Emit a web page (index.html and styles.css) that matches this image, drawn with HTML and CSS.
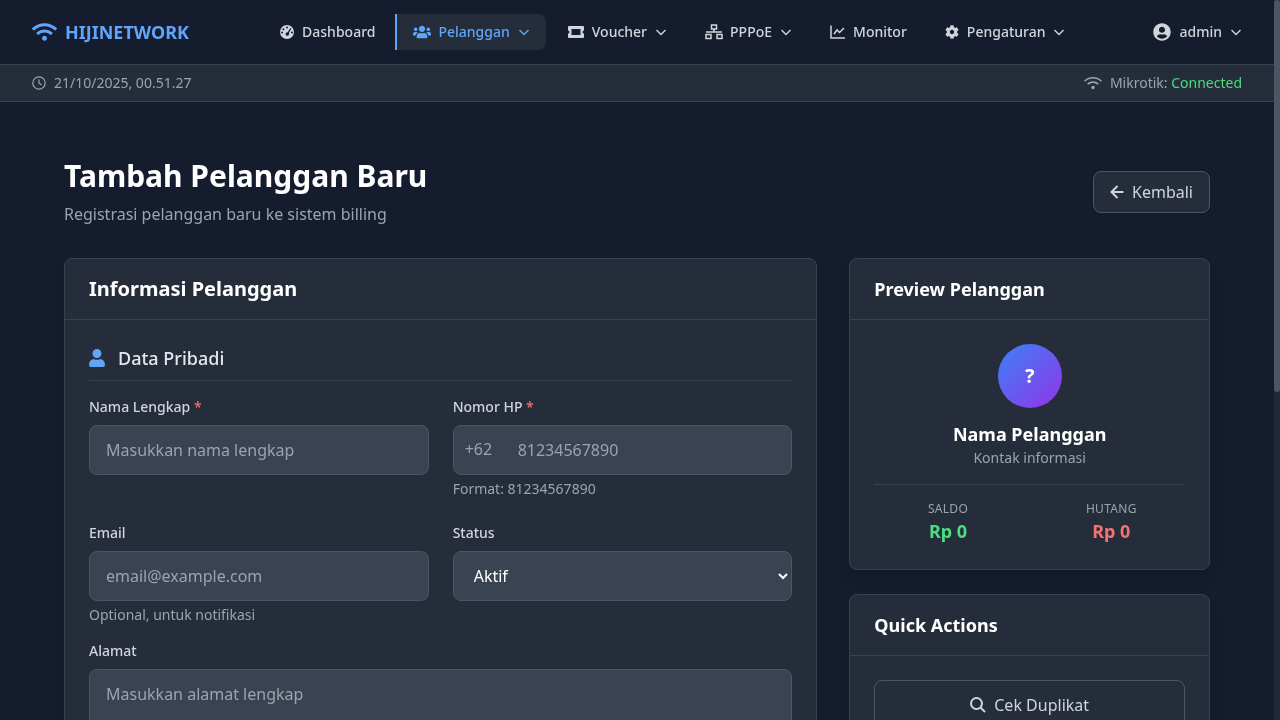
FILE: index.html
```html
<!DOCTYPE html>
<html>
	<head>
		<meta charset="UTF-8">
		<title>Tambah Pelanggan Baru</title>
		<link rel="stylesheet" href="styles.css">
	</head>
	<body>
		<div class="page">
		<nav class="topnav">
			<a class="brand" href="#">
				<svg class="brand-icon" viewBox="0 0 640 512"><path d="M634.91 154.88C457.74-8.99 182.19-8.93 5.09 154.88c-6.66 6.16-6.79 16.59-.35 22.98l34.24 33.97c6.14 6.1 16.02 6.23 22.4.38 145.92-133.68 371.3-133.71 517.25 0 6.38 5.85 16.26 5.71 22.4-.38l34.24-33.97c6.43-6.39 6.3-16.82-.36-22.98zM320 352c-35.35 0-64 28.65-64 64s28.65 64 64 64 64-28.65 64-64-28.65-64-64-64zm202.67-83.59c-115.26-101.93-290.21-101.82-405.34 0-6.9 6.1-7.12 16.69-.57 23.15l34.44 33.99c6 5.92 15.66 6.32 22.05.8 83.95-72.57 209.74-72.41 293.49 0 6.39 5.52 16.05 5.13 22.05-.8l34.44-33.99c6.56-6.46 6.33-17.06-.56-23.15z"/></svg>
				HIJINETWORK
			</a>
			<ul class="menu">
				<li class="menu-item">
					<svg class="menu-icon" viewBox="0 0 16 16"><path fill-rule="evenodd" d="M8 1a7 7 0 1 1 0 14A7 7 0 0 1 8 1zM8 2.6a1 1 0 1 0 0 2 1 1 0 0 0 0-2zM4.4 4.2a1 1 0 1 0 0 2 1 1 0 0 0 0-2zM3 7.6a1 1 0 1 0 0 2 1 1 0 0 0 0-2zM13 7.6a1 1 0 1 0 0 2 1 1 0 0 0 0-2zM11.3 4.1L8.6 8.4a1.7 1.7 0 1 0 1.2.8l2.5-4.6z"/></svg>
					Dashboard
				</li>
				<li class="menu-item active">
					<svg class="menu-icon users" viewBox="0 0 640 512"><path d="M96 224c35.3 0 64-28.7 64-64s-28.7-64-64-64-64 28.7-64 64 28.7 64 64 64zm448 0c35.3 0 64-28.7 64-64s-28.7-64-64-64-64 28.7-64 64 28.7 64 64 64zm32 32h-64c-17.6 0-33.5 7.1-45.1 18.6 40.3 22.1 68.9 62 75.1 109.4h66c17.7 0 32-14.3 32-32v-32c0-35.3-28.7-64-64-64zm-256 0c61.9 0 112-50.1 112-112S381.9 32 320 32 208 82.1 208 144s50.1 112 112 112zm76.8 32h-8.3c-20.8 10-43.9 16-68.5 16s-47.6-6-68.5-16h-8.3C179.6 288 128 339.6 128 403.2V432c0 26.5 21.5 48 48 48h288c26.5 0 48-21.5 48-48v-28.8c0-63.6-51.6-115.2-115.2-115.2zm-223.7-13.4C161.5 263.1 145.6 256 128 256H64c-35.3 0-64 28.7-64 64v32c0 17.7 14.3 32 32 32h65.9c6.3-47.4 34.9-87.3 75.2-109.4z"/></svg>
					Pelanggan
					<svg class="chevron" viewBox="0 0 12 12"><path d="M1.5 4l4.5 4.5L10.5 4"/></svg>
				</li>
				<li class="menu-item">
					<svg class="menu-icon ticket" viewBox="0 0 16 12"><path fill-rule="evenodd" d="M1 0h14a1 1 0 0 1 1 1v3.5a1.5 1.5 0 0 0 0 3V11a1 1 0 0 1-1 1H1a1 1 0 0 1-1-1V7.5a1.5 1.5 0 0 0 0-3V1a1 1 0 0 1 1-1zM3.5 3v6h9V3z"/></svg>
					Voucher
					<svg class="chevron" viewBox="0 0 12 12"><path d="M1.5 4l4.5 4.5L10.5 4"/></svg>
				</li>
				<li class="menu-item">
					<svg class="menu-icon wired line" viewBox="0 0 18 16"><path d="M6.5 1h5v4h-5zM1 10.5h5v4H1zM12 10.5h5v4h-5zM9 5v3M1 8h16"/></svg>
					PPPoE
					<svg class="chevron" viewBox="0 0 12 12"><path d="M1.5 4l4.5 4.5L10.5 4"/></svg>
				</li>
				<li class="menu-item">
					<svg class="menu-icon line" viewBox="0 0 16 16"><path d="M1 1.5V14h14M4 10l3-4 2.5 2.5L14 4"/></svg>
					Monitor
				</li>
				<li class="menu-item">
					<svg class="menu-icon cog" viewBox="0 0 512 512"><path d="M487.4 315.700l-42.600-24.600c4.300-23.200 4.300-47 0-70.200l42.600-24.600c4.900-2.800 7.100-8.600 5.500-14-11.100-35.600-30-67.800-54.700-94.600-3.800-4.100-10-5.100-14.800-2.300L380.800 110c-17.900-15.400-38.500-27.300-60.800-35.100V25.800c0-5.600-3.900-10.500-9.400-11.700-36.700-8.200-74.300-7.800-109.200 0-5.500 1.200-9.400 6.100-9.400 11.700V75c-22.200 7.900-42.800 19.800-60.800 35.100L88.700 85.500c-4.900-2.800-11-1.900-14.800 2.300-24.700 26.700-43.600 58.900-54.700 94.600-1.700 5.400.6 11.200 5.500 14L67.300 221c-4.300 23.200-4.300 47 0 70.200l-42.600 24.600c-4.900 2.800-7.100 8.600-5.500 14 11.100 35.600 30 67.800 54.700 94.600 3.800 4.100 10 5.100 14.800 2.300l42.600-24.600c17.900 15.400 38.500 27.300 60.800 35.100v49.200c0 5.600 3.900 10.500 9.400 11.700 36.700 8.200 74.300 7.800 109.200 0 5.500-1.200 9.400-6.100 9.400-11.700v-49.200c22.200-7.900 42.800-19.800 60.800-35.100l42.600 24.600c4.900 2.800 11 1.900 14.800-2.300 24.700-26.700 43.600-58.900 54.700-94.600 1.500-5.500-.7-11.300-5.600-14.100zM256 336c-44.100 0-80-35.900-80-80s35.900-80 80-80 80 35.900 80 80-35.900 80-80 80z"/></svg>
					Pengaturan
					<svg class="chevron" viewBox="0 0 12 12"><path d="M1.5 4l4.5 4.5L10.5 4"/></svg>
				</li>
			</ul>
			<div class="user-menu">
				<svg class="user-icon" viewBox="0 0 496 512"><path d="M248 8C111 8 0 119 0 256s111 248 248 248 248-111 248-248S385 8 248 8zm0 96c48.600 0 88 39.400 88 88s-39.400 88-88 88-88-39.400-88-88 39.400-88 88-88zm0 344c-58.700 0-111.300-26.600-146.500-68.200 18.800-35.400 55.600-59.800 98.500-59.800 2.400 0 4.800.4 7.100 1.100 13 4.200 26.600 6.900 40.900 6.900 14.300 0 28-2.700 40.900-6.900 2.300-.7 4.700-1.100 7.100-1.100 42.900 0 79.700 24.400 98.500 59.800C359.300 421.400 306.700 448 248 448z"/></svg>
				admin
				<svg class="chevron" viewBox="0 0 12 12"><path d="M1.5 4l4.5 4.5L10.5 4"/></svg>
			</div>
		</nav>

		<div class="statusbar">
			<div class="status-item">
				<svg class="clock-icon" viewBox="0 0 14 14"><circle cx="7" cy="7" r="6.200"/><path d="M7 3.500V7l2.500 2"/></svg>
				21/10/2025, 00.51.27
			</div>
			<div class="status-item">
				<svg class="status-wifi" viewBox="0 0 640 512"><path d="M634.91 154.88C457.74-8.99 182.19-8.93 5.09 154.88c-6.66 6.16-6.79 16.59-.35 22.98l20 20c6.14 6.1 16.02 6.23 22.4.38 150-137 396-137 546 0 6.38 5.85 16.26 5.71 22.4-.38l20-20c6.43-6.39 6.3-16.82-.36-22.98zM320 352c-35.35 0-64 28.65-64 64s28.65 64 64 64 64-28.65 64-64-28.65-64-64-64zm202.67-83.59c-115.26-101.93-290.21-101.82-405.34 0-6.9 6.1-7.12 16.69-.57 23.15l20 20c6 5.92 15.66 6.32 22.05.8 88-77 232-77 320 0 6.39 5.52 16.05 5.13 22.05-.8l20-20c6.56-6.46 6.33-17.06-.56-23.15z"/></svg>
				<span>Mikrotik: <span class="connected">Connected</span></span>
			</div>
		</div>

		<main class="content">
			<header class="page-head">
				<div>
					<h1>Tambah Pelanggan Baru</h1>
					<p>Registrasi pelanggan baru ke sistem billing</p>
				</div>
				<a class="btn-back" href="#">
					<svg class="btn-icon line-icon" viewBox="0 0 14 16"><path d="M13.500 8H1.500M7.500 2L1.500 8 7.500 14"/></svg>
					Kembali
				</a>
			</header>

			<div class="columns">
				<section class="card card-main">
					<div class="card-head"><h2>Informasi Pelanggan</h2></div>
					<div class="card-body">
						<h3 class="section-title">
							<svg class="section-icon" viewBox="0 0 448 512"><path d="M224 256c70.700 0 128-57.300 128-128S294.700 0 224 0 96 57.300 96 128s57.300 128 128 128zm89.600 32h-16.700c-22.200 10.200-46.900 16-72.900 16s-50.600-5.800-72.900-16h-16.700C60.200 288 0 348.200 0 422.400V464c0 26.500 21.500 48 48 48h352c26.500 0 48-21.500 48-48v-41.600c0-74.200-60.200-134.400-134.400-134.400z"/></svg>
							Data Pribadi
						</h3>
						<div class="form-grid">
							<div class="field">
								<label>Nama Lengkap <span class="req">*</span></label>
								<input type="text" placeholder="Masukkan nama lengkap">
							</div>
							<div class="field">
								<label>Nomor HP <span class="req">*</span></label>
								<div class="phone-wrap">
									<span class="prefix">+62</span>
									<input class="phone" type="text" placeholder="81234567890">
								</div>
								<small>Format: 81234567890</small>
							</div>
							<div class="field">
								<label>Email</label>
								<input type="text" placeholder="email@example.com">
								<small>Optional, untuk notifikasi</small>
							</div>
							<div class="field">
								<label>Status</label>
								<select>
									<option>Aktif</option>
									<option>Nonaktif</option>
								</select>
							</div>
						</div>
						<div class="field field-full">
							<label>Alamat</label>
							<textarea rows="3" placeholder="Masukkan alamat lengkap"></textarea>
						</div>
					</div>
				</section>

				<aside class="side">
					<section class="card">
						<div class="card-head"><h2 class="small-title">Preview Pelanggan</h2></div>
						<div class="card-body">
							<div class="preview">
								<div class="avatar">?</div>
								<div class="preview-name">Nama Pelanggan</div>
								<div class="preview-contact">Kontak informasi</div>
							</div>
							<div class="stats">
								<div>
									<div class="stat-label">SALDO</div>
									<div class="stat-value green">Rp 0</div>
								</div>
								<div>
									<div class="stat-label">HUTANG</div>
									<div class="stat-value red">Rp 0</div>
								</div>
							</div>
						</div>
					</section>
					<section class="card">
						<div class="card-head"><h2 class="small-title">Quick Actions</h2></div>
						<div class="card-body">
							<a class="btn-action" href="#">
								<svg class="btn-icon line-icon search" viewBox="0 0 16 16"><circle cx="6.500" cy="6.500" r="5.500"/><path d="M10.500 10.500L15 15"/></svg>
								Cek Duplikat
							</a>
						</div>
					</section>
				</aside>
			</div>
		</main>
		</div>
		<div class="scrollbar"><div class="scrollbar-thumb"></div></div>
	</body>
</html>
```

FILE: styles.css
```css
*{
	margin:0;
	padding:0;
	box-sizing:border-box;
	list-style:none;
}
html,body{
	height:100%;
	overflow:hidden;
}
body{
	display:flex;
	background:#151c2e;
	color:#e5e7eb;
	font-family:"Noto Sans",sans-serif;
	font-size:16px;
	line-height:24px;
}
.page{
	flex:1;
	min-width:0;
	height:100%;
	overflow:hidden;
	will-change:transform;
}
.scrollbar{
	width:6px;
	height:100%;
	background:#1f2937;
}
.scrollbar-thumb{
	height:392px;
	background:#4b5563;
	border-radius:3px;
}
a{
	text-decoration:none;
	color:inherit;
}
svg{
	fill:currentColor;
	flex:none;
}

/* top nav */
.topnav{
	height:65px;
	padding:0 32px;
	display:flex;
	align-items:center;
	justify-content:space-between;
	background:#151c2e;
	border-bottom:1px solid #374151;
}
.brand{
	display:flex;
	align-items:center;
	gap:8px;
	color:#60a5fa;
	font-size:18px;
	font-weight:700;
}
.brand-icon{
	width:25px;
	height:20px;
}
.menu{
	display:flex;
	gap:4px;
}
.menu-item{
	display:flex;
	align-items:center;
	height:36px;
	padding:0 16px;
	border-left:2px solid transparent;
	border-radius:0 8px 8px 0;
	color:#d1d5db;
	font-size:14px;
	font-weight:500;
	line-height:20px;
}
.menu-item.active{
	background:#242d39;
	border-left-color:#60a5fa;
	color:#60a5fa;
}
.menu-icon{
	width:16px;
	height:16px;
	margin-right:7px;
}
.menu-icon.ticket{
	margin-right:8px;
}
.menu-icon.users,.menu-icon.wired{
	width:18px;
}
.menu-icon.cog{
	width:14px;
	margin-right:8px;
}
.menu-icon.line,.clock-icon,.line-icon{
	fill:none;
	stroke:currentColor;
	stroke-width:1.5;
}
.chevron{
	width:12px;
	height:12px;
	margin-left:8px;
	fill:none;
	stroke:currentColor;
	stroke-width:1.4;
}
.user-menu{
	display:flex;
	align-items:center;
	color:#d1d5db;
	font-size:14px;
	font-weight:500;
}
.user-icon{
	width:18px;
	height:18px;
	margin-right:8px;
}

/* status bar */
.statusbar{
	height:37px;
	padding:0 32px;
	display:flex;
	align-items:center;
	justify-content:space-between;
	background:#242d39;
	border-bottom:1px solid #374151;
	color:#9ca3af;
	font-size:14px;
}
.status-item{
	display:flex;
	align-items:center;
}
.clock-icon{
	width:14px;
	height:14px;
	margin-right:8px;
	stroke-width:1.2;
}
.status-wifi{
	width:18px;
	height:14px;
	margin-right:8px;
}
.connected{
	color:#4ade80;
}

/* page */
.content{
	padding:56px 64px 32px;
}
.page-head{
	display:flex;
	align-items:center;
	justify-content:space-between;
	margin-bottom:32px;
}
.page-head h1{
	font-size:30px;
	line-height:36px;
	font-weight:700;
	color:#fff;
}
.page-head p{
	margin-top:8px;
	color:#9ca3af;
}
.btn-back{
	display:flex;
	align-items:center;
	padding:8px 16px;
	background:#242d39;
	border:1px solid #4b5563;
	border-radius:8px;
	color:#d1d5db;
}
.btn-icon{
	width:14px;
	height:16px;
	margin-right:8px;
}
.line-icon{
	stroke-width:2;
}
.columns{
	display:grid;
	grid-template-columns:repeat(3,1fr);
	gap:32px;
}
.card-main{
	grid-column:span 2;
}
.side{
	display:flex;
	flex-direction:column;
	gap:24px;
}
.card{
	background:#242d39;
	border:1px solid #374151;
	border-radius:8px;
	box-shadow:0 10px 15px -3px rgba(0,0,0,.1),0 4px 6px -2px rgba(0,0,0,.05);
}
.card-head{
	padding:16px 24px;
	border-bottom:1px solid #374151;
}
.card-head h2{
	font-size:20px;
	line-height:28px;
	font-weight:700;
	color:#fff;
}
.card-head h2.small-title{
	font-size:18px;
}
.card-body{
	padding:24px;
}

/* form */
.section-title{
	display:flex;
	align-items:center;
	padding-bottom:8px;
	margin-bottom:16px;
	border-bottom:1px solid #374151;
	font-size:18px;
	line-height:28px;
	font-weight:500;
}
.section-icon{
	width:16px;
	height:18px;
	margin-right:13px;
	color:#60a5fa;
}
.form-grid{
	display:grid;
	grid-template-columns:1fr 1fr;
	gap:24px;
}
.field-full{
	margin-top:16px;
}
label{
	display:block;
	margin-bottom:8px;
	color:#d1d5db;
	font-size:14px;
	line-height:20px;
	font-weight:500;
}
.req{
	color:#f87171;
}
input,select,textarea{
	display:block;
	width:100%;
	padding:12px 16px;
	background:#3a4351;
	border:1px solid #4b5563;
	border-radius:8px;
	color:#fff;
	font-family:inherit;
	font-size:16px;
	line-height:24px;
}
select{
	height:50px;
}
textarea{
	resize:none;
}
::placeholder{
	color:#9ca3af;
	opacity:1;
}
.phone-wrap{
	position:relative;
}
.prefix{
	position:absolute;
	left:12px;
	top:12px;
	color:#9ca3af;
}
input.phone{
	padding-left:64px;
}
small{
	display:block;
	margin-top:4px;
	color:#9ca3af;
	font-size:14px;
	line-height:20px;
}

/* side cards */
.preview{
	display:flex;
	flex-direction:column;
	align-items:center;
}
.avatar{
	width:64px;
	height:64px;
	margin-bottom:12px;
	display:flex;
	align-items:center;
	justify-content:center;
	border-radius:50%;
	background:linear-gradient(135deg,#3b82f6,#9333ea);
	color:#fff;
	font-size:20px;
	font-weight:700;
}
.preview-name{
	color:#fff;
	font-size:18px;
	line-height:28px;
	font-weight:700;
}
.preview-contact{
	color:#9ca3af;
	font-size:14px;
	line-height:20px;
}
.stats{
	display:grid;
	grid-template-columns:1fr 1fr;
	gap:16px;
	margin-top:16px;
	padding-top:16px;
	border-top:1px solid #374151;
	text-align:center;
}
.stat-label{
	color:#9ca3af;
	font-size:12px;
	line-height:16px;
	letter-spacing:.3px;
}
.stat-value{
	font-size:18px;
	line-height:28px;
	font-weight:700;
}
.green{
	color:#4ade80;
}
.red{
	color:#f87171;
}
.btn-action{
	display:flex;
	align-items:center;
	justify-content:center;
	padding:12px 16px;
	border:1px solid #4b5563;
	border-radius:8px;
	color:#d1d5db;
}
.btn-icon.search{
	width:16px;
}
```
